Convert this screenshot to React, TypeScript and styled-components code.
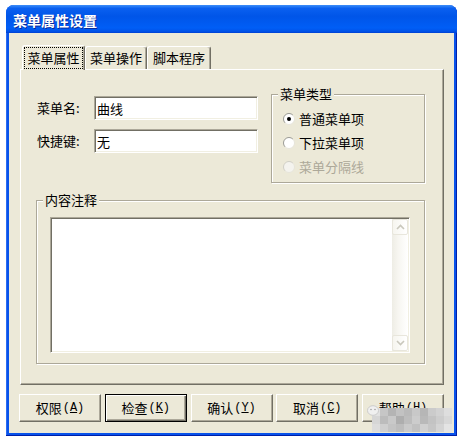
import React from 'react';
import styled, { createGlobalStyle, css } from 'styled-components';

const FONT = `"Noto Sans CJK SC", "Liberation Sans", sans-serif`;

const GlobalStyle = createGlobalStyle`
  html, body { margin: 0; padding: 0; background: #ffffff; }
  body { font-family: ${FONT}; font-size: 13px; color: #000; }
  * { box-sizing: border-box; }
`;

const Window = styled.div`
  position: relative;
  margin: 5px 0 0 6px;
  width: 451px;
  height: 431px;
  display: flex;
  flex-direction: column;
  border-radius: 8px 8px 0 0;
  background: #0852ea;
  box-shadow: inset -1px -1px 0 #0020a8, inset 1px 0 0 #2a6cf0;
  overflow: hidden;
`;

const TitleBar = styled.div`
  flex: none;
  height: 28px;
  display: flex;
  align-items: center;
  padding: 2px 0 0 7px;
  background: linear-gradient(
    to bottom,
    #3d8ef8 0%,
    #0a60f0 12%,
    #0055e8 40%,
    #005ef6 82%,
    #0052e8 94%,
    #0040d2 100%
  );
  color: #fff;
  font-weight: bold;
  font-size: 14px;
  line-height: 16px;
  text-shadow: 1px 1px 0 #0a2a9a;
`;

const Body = styled.div`
  flex: 1;
  margin: 0 3px 3px 3px;
  background: #ece9d8;
  padding: 11px 10px 11px 11px;
  display: flex;
  flex-direction: column;
`;

const TabStrip = styled.div`
  position: relative;
  z-index: 1;
  height: 25px;
  display: flex;
  align-items: flex-end;
  padding-left: 2px;
`;

const Tab = styled.div<{ $active?: boolean; $w: number }>`
  width: ${(p) => p.$w}px;
  height: ${(p) => (p.$active ? 25 : 23)}px;
  margin-bottom: ${(p) => (p.$active ? -1 : 0)}px;
  background: #ece9d8;
  border-top: 1px solid #fff;
  border-left: 1px solid #fff;
  border-right: 1px solid #716f64;
  box-shadow: inset -1px 0 0 #aca899;
  border-radius: 3px 3px 0 0;
  display: flex;
  align-items: center;
  justify-content: center;
  font-size: 13px;
  line-height: 14px;
`;

const FocusText = styled.span`
  outline: 1px dotted #000;
  outline-offset: 0;
  padding: 3px 2px;
`;

const Panel = styled.div`
  height: 316px;
  border: 1px solid;
  border-color: #fff #716f64 #716f64 #fff;
  box-shadow: inset -1px -1px 0 #aca899;
  padding: 17px 18px 0 15px;
  display: flex;
  flex-direction: column;
`;

const TopRow = styled.div`
  display: flex;
  align-items: flex-start;
`;

const Form = styled.div`
  width: 222px;
  padding-top: 9px;
  display: flex;
  flex-direction: column;
  gap: 9px;
`;

const FieldRow = styled.div`
  display: flex;
  align-items: center;
  height: 24px;
`;

const Label = styled.label`
  width: 58px;
  padding-left: 1px;
  font-size: 13px;
  line-height: 16px;
`;

const TextInput = styled.input`
  width: 164px;
  height: 24px;
  margin: 0;
  background: #fff;
  border: 1px solid;
  border-color: #aca899 #fff #fff #aca899;
  box-shadow: inset 1px 1px 0 #716f64, inset -1px -1px 0 #f1efe2;
  padding: 0 2px;
  font-family: ${FONT};
  font-size: 13px;
  color: #000;
  outline: none;
`;

const Group = styled.div<{ $w: number; $h: number }>`
  position: relative;
  width: ${(p) => p.$w}px;
  height: ${(p) => p.$h}px;
  border: 1px solid #aca899;
  box-shadow: inset 1px 1px 0 #fff, 1px 1px 0 #fff;
`;

const Legend = styled.span`
  position: absolute;
  left: 6px;
  top: -9px;
  padding: 0 2px;
  background: #ece9d8;
  font-size: 13px;
  line-height: 16px;
`;

const TypeGroup = styled(Group)`
  margin: 7px 0 0 13px;
  padding: 12px 0 0 11px;
`;

const RadioRow = styled.div<{ $disabled?: boolean }>`
  height: 24px;
  display: flex;
  align-items: center;
  gap: 4px;
  font-size: 13px;
  line-height: 16px;
  color: ${(p) => (p.$disabled ? '#aca899' : '#000')};
`;

const NoteGroup = styled(Group)`
  margin-top: 17px;
  padding: 16px 14px 10px 13px;
`;

const TextBox = styled.div`
  width: 360px;
  height: 136px;
  display: flex;
  background: #fff;
  border: 1px solid;
  border-color: #aca899 #fff #fff #aca899;
  box-shadow: inset 1px 1px 0 #716f64, inset -1px -1px 0 #f1efe2;
  padding: 1px;
`;

const TextArea = styled.div`
  flex: 1;
`;

const ScrollBar = styled.div`
  width: 16px;
  display: flex;
  flex-direction: column;
  justify-content: space-between;
  background: linear-gradient(to right, #eeede5 0%, #f7f6f1 40%, #ffffff 100%);
`;

const ScrollBtn = styled.div`
  width: 16px;
  height: 16px;
  border: 1px solid #e8e6dc;
  border-radius: 2px;
  background: linear-gradient(to right, #f6f5ef, #ffffff);
  display: flex;
  align-items: center;
  justify-content: center;
`;

const ButtonRow = styled.div`
  margin: 9px 0 0 -1px;
  width: 425px;
  display: flex;
  justify-content: space-between;
`;

const Button = styled.button<{ $default?: boolean }>`
  width: 82px;
  height: 28px;
  margin: 0;
  padding: 0;
  display: flex;
  align-items: center;
  justify-content: center;
  font-family: ${FONT};
  font-size: 13px;
  line-height: 16px;
  color: #000;
  background: #ece9d8;
  border: 1px solid;
  border-color: #fff #716f64 #716f64 #fff;
  box-shadow: inset -1px -1px 0 #aca899;
  ${(p) =>
    p.$default &&
    css`
      border-color: #000;
      box-shadow: inset 1px 1px 0 #fff, inset -1px -1px 0 #716f64, inset -2px -2px 0 #aca899;
    `}
`;

const Hotkey = styled.span`
  font-family: "Liberation Mono", monospace;
  font-size: 12px;
  margin-left: 1px;
`;

const Key = styled.span`
  text-decoration: underline;
`;

const Watermark = styled.div`
  position: absolute;
  left: 362px;
  top: 403px;
  width: 82px;
  height: 25px;
  pointer-events: none;
  display: grid;
  grid-template-columns: repeat(10, 8px);
  grid-template-rows: repeat(3, 8px);
  padding-left: 4px;
  filter: blur(0.5px);
`;

const Cell = styled.div<{ $c: string }>`
  background: ${(p) => p.$c};
`;

const WeChat = styled.svg`
  position: absolute;
  left: -1px;
  top: -3px;
`;

const MOSAIC = [
  '#e2e2e2', '#c6c6c6', '#b4b4b4', '#c2c2c2', '#bababa', '#c8c8c8', '#b6b6b6', '#cbcbcb', '#d2d2d2', '#dedede',
  '#d6d6d6', '#bcbcbc', '#c9c9c9', '#aeaeae', '#bdbdbd', '#cccccc', '#b9b9b9', '#c3c3c3', '#cdcdcd', '#d8d8d8',
  '#dcdcdc', '#cfcfcf', '#c4c4c4', '#bdbdbd', '#cacaca', '#c1c1c1', '#d0d0d0', '#c6c6c6', '#d4d4d4', '#e4e4e4',
];

const Radio: React.FC<{ checked?: boolean; disabled?: boolean }> = ({ checked, disabled }) => (
  <svg width="12" height="12" viewBox="0 0 12 12">
    <circle cx="6" cy="6" r="5.5" fill={disabled ? '#f4f3ee' : '#fff'} />
    <path
      d="M2.1 9.9 A5.5 5.5 0 0 1 9.9 2.1"
      fill="none"
      stroke={disabled ? '#d0cfc6' : '#9a9a94'}
      strokeWidth="1"
    />
    <path d="M9.9 2.1 A5.5 5.5 0 0 1 2.1 9.9" fill="none" stroke="#e6e4da" strokeWidth="1" />
    {checked && <circle cx="6" cy="6" r="2" fill="#000" />}
  </svg>
);

const Chevron: React.FC<{ up?: boolean }> = ({ up }) => (
  <svg width="9" height="6" viewBox="0 0 9 6">
    <path
      d={up ? 'M1 5 L4.5 1.5 L8 5' : 'M1 1 L4.5 4.5 L8 1'}
      fill="none"
      stroke="#c9c7bc"
      strokeWidth="1.6"
    />
  </svg>
);

const HotkeyLabel: React.FC<{ text: string; k: string }> = ({ text, k }) => (
  <>
    {text}
    <Hotkey>
      (<Key>{k}</Key>)
    </Hotkey>
  </>
);

export default function App() {
  return (
    <>
      <GlobalStyle />
      <Window>
        <TitleBar>菜单属性设置</TitleBar>
        <Body>
          <TabStrip>
            <Tab $active $w={63}>
              <FocusText>菜单属性</FocusText>
            </Tab>
            <Tab $w={62}>菜单操作</Tab>
            <Tab $w={64}>脚本程序</Tab>
          </TabStrip>
          <Panel>
            <TopRow>
              <Form>
                <FieldRow>
                  <Label>菜单名:</Label>
                  <TextInput readOnly defaultValue="曲线" />
                </FieldRow>
                <FieldRow>
                  <Label>快捷键:</Label>
                  <TextInput readOnly defaultValue="无" />
                </FieldRow>
              </Form>
              <TypeGroup $w={154} $h={89}>
                <Legend>菜单类型</Legend>
                <RadioRow>
                  <Radio checked />
                  普通菜单项
                </RadioRow>
                <RadioRow>
                  <Radio />
                  下拉菜单项
                </RadioRow>
                <RadioRow $disabled>
                  <Radio disabled />
                  菜单分隔线
                </RadioRow>
              </TypeGroup>
            </TopRow>
            <NoteGroup $w={389} $h={164}>
              <Legend>内容注释</Legend>
              <TextBox>
                <TextArea />
                <ScrollBar>
                  <ScrollBtn>
                    <Chevron up />
                  </ScrollBtn>
                  <ScrollBtn>
                    <Chevron />
                  </ScrollBtn>
                </ScrollBar>
              </TextBox>
            </NoteGroup>
          </Panel>
          <ButtonRow>
            <Button>
              <HotkeyLabel text="权限" k="A" />
            </Button>
            <Button $default>
              <HotkeyLabel text="检查" k="K" />
            </Button>
            <Button>
              <HotkeyLabel text="确认" k="Y" />
            </Button>
            <Button>
              <HotkeyLabel text="取消" k="C" />
            </Button>
            <Button>
              <HotkeyLabel text="帮助" k="H" />
            </Button>
          </ButtonRow>
        </Body>
        <Watermark aria-hidden>
          {MOSAIC.map((c, i) => (
            <Cell key={i} $c={c} />
          ))}
          <WeChat width="14" height="12" viewBox="0 0 14 12">
            <ellipse cx="6" cy="5.5" rx="5.5" ry="4.8" fill="#f0f0f0" stroke="#c4c4c4" strokeWidth="0.8" />
            <circle cx="4" cy="4.5" r="0.8" fill="#a0a0a0" />
            <circle cx="8" cy="4.5" r="0.8" fill="#a0a0a0" />
          </WeChat>
        </Watermark>
      </Window>
    </>
  );
}
